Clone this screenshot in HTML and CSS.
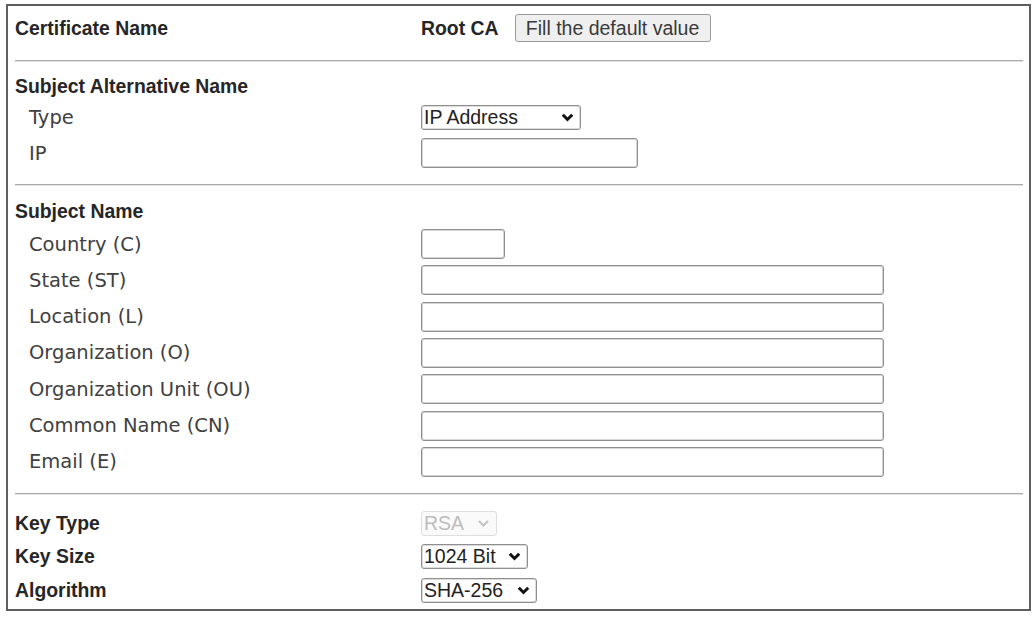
FILE: index.html
```html
<!DOCTYPE html>
<html lang="en">
<head>
<meta charset="utf-8">
<title>Certificate</title>
<link rel="stylesheet" href="styles.css">
</head>
<body>
<div class="panel">
  <div class="row row-cert">
    <div class="label bold">Certificate Name</div>
    <div class="field">
      <span class="bold">Root CA</span>
      <button class="btn" type="button">Fill the default value</button>
    </div>
  </div>

  <div class="sep sep-1"></div>

  <div class="sec sec-san">
    <div class="heading bold">Subject Alternative Name</div>
    <div class="row row-sel row-type">
      <div class="label sub">Type</div>
      <div class="field">
        <span class="selwrap">
          <select class="sel w-ip"><option>IP Address</option></select>
          <svg class="chev" width="13" height="9" viewBox="0 0 13 9"><path d="M1.8 1.8 L6.5 6.5 L11.2 1.8" fill="none" stroke="#111" stroke-width="3"/></svg>
        </span>
      </div>
    </div>
    <div class="row row-inp row-ip">
      <div class="label sub">IP</div>
      <div class="field"><input class="inp w-ipaddr" type="text"></div>
    </div>
  </div>

  <div class="sep sep-2"></div>

  <div class="sec sec-subj">
    <div class="heading bold">Subject Name</div>
    <div class="fields">
      <div class="row row-inp">
        <div class="label sub">Country (C)</div>
        <div class="field"><input class="inp w-country" type="text"></div>
      </div>
      <div class="row row-inp">
        <div class="label sub">State (ST)</div>
        <div class="field"><input class="inp w-long" type="text"></div>
      </div>
      <div class="row row-inp">
        <div class="label sub">Location (L)</div>
        <div class="field"><input class="inp w-long" type="text"></div>
      </div>
      <div class="row row-inp">
        <div class="label sub">Organization (O)</div>
        <div class="field"><input class="inp w-long" type="text"></div>
      </div>
      <div class="row row-inp">
        <div class="label sub">Organization Unit (OU)</div>
        <div class="field"><input class="inp w-long" type="text"></div>
      </div>
      <div class="row row-inp">
        <div class="label sub">Common Name (CN)</div>
        <div class="field"><input class="inp w-long" type="text"></div>
      </div>
      <div class="row row-inp">
        <div class="label sub">Email (E)</div>
        <div class="field"><input class="inp w-long" type="text"></div>
      </div>
    </div>
  </div>

  <div class="sep sep-3"></div>

  <div class="sec sec-key">
    <div class="row row-sel">
      <div class="label bold">Key Type</div>
      <div class="field">
        <span class="selwrap">
          <select class="sel w-rsa" disabled><option>RSA</option></select>
          <svg class="chev" width="13" height="9" viewBox="0 0 13 9"><path d="M2 2 L6.5 6.5 L11 2" fill="none" stroke="#c4c4c4" stroke-width="2"/></svg>
        </span>
      </div>
    </div>
    <div class="row row-sel">
      <div class="label bold">Key Size</div>
      <div class="field">
        <span class="selwrap">
          <select class="sel w-size"><option>1024 Bit</option></select>
          <svg class="chev" width="13" height="9" viewBox="0 0 13 9"><path d="M1.8 1.8 L6.5 6.5 L11.2 1.8" fill="none" stroke="#111" stroke-width="3"/></svg>
        </span>
      </div>
    </div>
    <div class="row row-sel">
      <div class="label bold">Algorithm</div>
      <div class="field">
        <span class="selwrap">
          <select class="sel w-alg"><option>SHA-256</option></select>
          <svg class="chev" width="13" height="9" viewBox="0 0 13 9"><path d="M1.8 1.8 L6.5 6.5 L11.2 1.8" fill="none" stroke="#111" stroke-width="3"/></svg>
        </span>
      </div>
    </div>
  </div>
</div>
</body>
</html>
```

FILE: styles.css
```css
* { box-sizing: border-box; }

html, body { background: #fff; }

body {
  margin: 4px 4px 0 6px;
  font-family: "DejaVu Sans", Verdana, sans-serif;
  color: #3a3a3a;
}

.panel {
  width: 1025px;
  border: 2px solid #5e5e5e;
  padding: 0 6px 6px 7px;
}

.bold {
  font-family: "Liberation Sans", Arial, sans-serif;
  font-weight: bold;
  font-size: 19.4px;
  color: #262626;
}

.row {
  display: grid;
  grid-template-columns: 406px 1fr;
  align-items: center;
}

.row-cert { height: 44px; }
.row-inp { height: 30px; }
.row-sel { height: 25px; }

.label.sub {
  padding-left: 14px;
  font-size: 19.5px;
  color: #404040;
}

.field {
  display: flex;
  align-items: center;
}

.btn {
  margin-left: 16px;
  height: 28px;
  width: 196px;
  padding: 0;
  font-family: "Liberation Sans", Arial, sans-serif;
  font-size: 19.5px;
  color: #3a3a3a;
  background: #efefef;
  border: 1px solid #9a9a9a;
  border-radius: 3px;
}

.sep {
  height: 2px;
  border-top: 1px solid #a9a9a9;
  border-bottom: 1px solid #e3e3e3;
}
.sep-1 { margin-top: 10px; }
.sep-2 { margin-top: 17px; }
.sep-3 { margin-top: 16px; }

.heading { line-height: 24px; height: 24px; }

.sec-san { padding-top: 12px; }
.sec-san .row-type { margin-top: 5px; height: 29px; }
.sec-san .row-ip { margin-top: 6px; height: 29px; }

.sec-subj { padding-top: 13px; }
.fields {
  margin-top: 6px;
  display: flex;
  flex-direction: column;
  gap: 6.33px;
}

.sec-key {
  padding-top: 16px;
  display: flex;
  flex-direction: column;
  gap: 8.5px;
}

.inp {
  height: 30px;
  margin: 0;
  padding: 0 3px;
  border: 1px solid #8f8f8f;
  box-shadow: inset 0 0 0 1px #d6d6d6;
  border-radius: 3px;
  background: #fff;
  font-family: "Liberation Sans", Arial, sans-serif;
  font-size: 19px;
}
.w-ipaddr { width: 217px; }
.w-country { width: 84px; }
.w-long { width: 463px; }

.selwrap {
  position: relative;
  display: inline-block;
  height: 25px;
}

.sel {
  -webkit-appearance: none;
  appearance: none;
  height: 25px;
  margin: 0;
  padding: 0 0 0 2px;
  border: 1px solid #8f8f8f;
  box-shadow: inset 0 0 0 1px #dcdcdc;
  border-radius: 3px;
  background: #fff;
  font-family: "Liberation Sans", Arial, sans-serif;
  font-size: 19.5px;
  line-height: 23px;
  color: #222;
}
.sel:disabled {
  color: #bdbdbd;
  border-color: #dedede;
  box-shadow: none;
  background: #fafafa;
  opacity: 1;
}

.w-ip { width: 160px; }
.w-rsa { width: 76px; }
.w-size { width: 107px; }
.w-alg { width: 116px; }

.chev {
  position: absolute;
  right: 7px;
  top: 8px;
  pointer-events: none;
}
```
